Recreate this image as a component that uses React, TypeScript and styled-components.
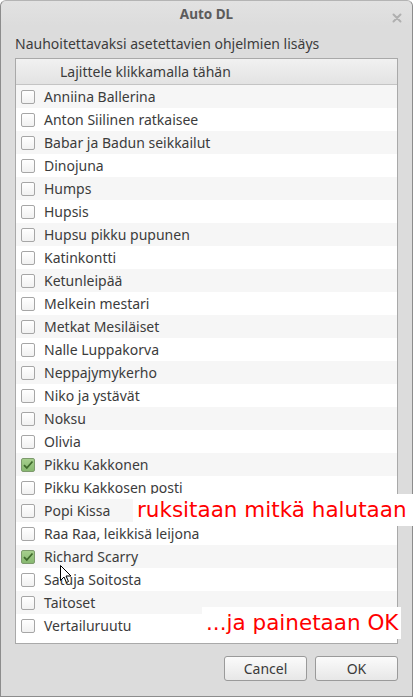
import React from "react";
import styled, { createGlobalStyle } from "styled-components";

// ------ Global ------

const GlobalStyle = createGlobalStyle`
  html, body {
    margin: 0;
    padding: 0;
    background: #ffffff;
  }
  body {
    font-family: "Noto Sans", "DejaVu Sans", sans-serif;
  }
`;

// ------ Data ------

const programs: { name: string; checked?: boolean }[] = [
  { name: "Anniina Ballerina" },
  { name: "Anton Siilinen ratkaisee" },
  { name: "Babar ja Badun seikkailut" },
  { name: "Dinojuna" },
  { name: "Humps" },
  { name: "Hupsis" },
  { name: "Hupsu pikku pupunen" },
  { name: "Katinkontti" },
  { name: "Ketunleipää" },
  { name: "Melkein mestari" },
  { name: "Metkat Mesiläiset" },
  { name: "Nalle Luppakorva" },
  { name: "Neppajymykerho" },
  { name: "Niko ja ystävät" },
  { name: "Noksu" },
  { name: "Olivia" },
  { name: "Pikku Kakkonen", checked: true },
  { name: "Pikku Kakkosen posti" },
  { name: "Popi Kissa" },
  { name: "Raa Raa, leikkisä leijona" },
  { name: "Richard Scarry", checked: true },
  { name: "Satuja Soitosta" },
  { name: "Taitoset" },
  { name: "Vertailuruutu" },
];

// ------ Styled Components ------

const Page = styled.div`
  position: relative;
  width: 413px;
  height: 697px;
  overflow: hidden;
`;

const Dialog = styled.div`
  box-sizing: border-box;
  width: 413px;
  height: 697px;
  background: #dcdcdc;
  border: 1px solid #8c8c8c;
  border-top-color: #b4b4b4;
  border-radius: 6px 6px 0 0;
  display: flex;
  flex-direction: column;
`;

const TitleBar = styled.div`
  height: 25px;
  display: flex;
  align-items: center;
  justify-content: center;
  position: relative;
  background: linear-gradient(#e2e2e2, #dcdcdc);
  border-radius: 6px 6px 0 0;
`;

const Title = styled.div`
  font-size: 13.5px;
  font-weight: bold;
  color: #5c5c5c;
  padding-top: 1px;
`;

const Close = styled.div`
  position: absolute;
  right: 9px;
  top: 6px;
  width: 12px;
  height: 12px;
`;

const Body = styled.div`
  flex: 1;
  display: flex;
  flex-direction: column;
  padding: 7px 13px 0 14px;
`;

const Label = styled.div`
  font-size: 14px;
  color: #3c3c3c;
  height: 25px;
  line-height: 22px;
`;

const ListBox = styled.div`
  box-sizing: border-box;
  width: 383px;
  height: 586px;
  background: #ffffff;
  border: 1px solid #a9a9a9;
  display: flex;
  flex-direction: column;
`;

const Header = styled.div`
  height: 25px;
  flex: none;
  border-bottom: 1px solid #c4c4c4;
  background: linear-gradient(#f1f1f1, #e3e3e3);
  display: flex;
  align-items: center;
  padding-left: 44px;
  font-size: 14px;
  color: #3c3c3c;
`;

const Row = styled.div<{ $odd: boolean }>`
  height: 23px;
  flex: none;
  display: flex;
  align-items: center;
  background: ${(p) => (p.$odd ? "#ffffff" : "#f6f6f6")};
  padding-left: 5px;
  font-size: 14px;
  color: #3c3c3c;
`;

const Box = styled.div<{ $checked?: boolean }>`
  box-sizing: border-box;
  width: 14px;
  height: 14px;
  border-radius: 2px;
  border: 1px solid ${(p) => (p.$checked ? "#7d9a6d" : "#a6a6a6")};
  background: ${(p) =>
    p.$checked
      ? "linear-gradient(#a6cf8d, #87b870)"
      : "linear-gradient(#ffffff, #f1f1f1)"};
  margin-right: 9px;
  display: flex;
  align-items: center;
  justify-content: center;
`;

const Footer = styled.div`
  flex: 1;
  display: flex;
  justify-content: flex-end;
  align-items: flex-start;
  gap: 8px;
  padding-top: 12px;
  padding-right: 1px;
`;

const Button = styled.div`
  box-sizing: border-box;
  width: 83px;
  height: 25px;
  border: 1px solid #9a9a9a;
  border-radius: 3px;
  background: linear-gradient(#fbfbfb, #e7e7e7);
  display: flex;
  align-items: center;
  justify-content: center;
  font-size: 14px;
  color: #3a3a3a;
`;

const Note = styled.div<{ $x: number; $y: number; $w: number }>`
  position: absolute;
  left: ${(p) => p.$x}px;
  top: ${(p) => p.$y}px;
  width: ${(p) => p.$w}px;
  height: 32px;
  background: #ffffff;
  color: #ff0000;
  font-family: "DejaVu Sans", sans-serif;
  font-size: 21.5px;
  line-height: 31px;
  padding-left: 4px;
  box-sizing: border-box;
  white-space: nowrap;
`;

const Cursor = styled.svg`
  position: absolute;
  left: 60px;
  top: 565px;
`;

// ------ Component ------

const App = () => {
  return (
    <Page>
      <GlobalStyle />
      <Dialog>
        <TitleBar>
          <Title>Auto DL</Title>
          <Close>
            <svg width="12" height="12" viewBox="0 0 12 12">
              <path
                d="M2.5 2.5 L9.5 9.5 M9.5 2.5 L2.5 9.5"
                stroke="#b0b0b0"
                strokeWidth="2"
                strokeLinecap="round"
              />
            </svg>
          </Close>
        </TitleBar>
        <Body>
          <Label>Nauhoitettavaksi asetettavien ohjelmien lisäys</Label>
          <ListBox>
            <Header>Lajittele klikkamalla tähän</Header>
            {programs.map((p, i) => (
              <Row key={p.name} $odd={i % 2 === 1}>
                <Box $checked={p.checked}>
                  {p.checked && (
                    <svg width="12" height="12" viewBox="0 0 12 12">
                      <path
                        d="M2 6.2 L4.8 9 L10.5 2.5"
                        fill="none"
                        stroke="#3f6a2c"
                        strokeWidth="1.8"
                      />
                    </svg>
                  )}
                </Box>
                {p.name}
              </Row>
            ))}
          </ListBox>
          <Footer>
            <Button>Cancel</Button>
            <Button>OK</Button>
          </Footer>
        </Body>
      </Dialog>
      <Note $x={133} $y={494} $w={280}>
        ruksitaan mitkä halutaan
      </Note>
      <Note $x={202} $y={607} $w={199}>
        ...ja painetaan OK
      </Note>
      <Cursor width="12" height="19" viewBox="0 0 12 19">
        <path
          d="M0.5 0.5 L0.5 15.5 L4 12 L6.5 17.5 L8.5 16.5 L6 11 L11 11 Z"
          fill="#ffffff"
          stroke="#000000"
          strokeWidth="1"
          strokeLinejoin="miter"
        />
      </Cursor>
    </Page>
  );
};

export default App;
